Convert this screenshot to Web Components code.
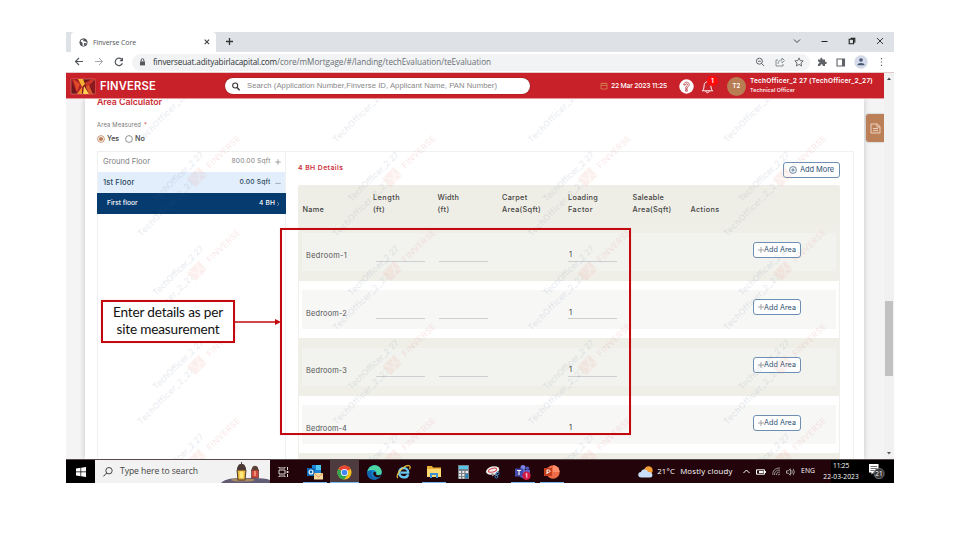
<!DOCTYPE html>
<html lang="en"><head><meta charset="utf-8"><title>Finverse Core</title>
<style>html,body{margin:0;background:#fff;width:960px;height:540px;overflow:hidden}body{padding:32px 66px 0;box-sizing:border-box;position:relative;font-family:Inter,"Open Sans",sans-serif}</style></head><body>
<app-window></app-window>
<note-callout><fit-text s="13.6" w="110" f="Lato" c="#111">Enter details as per</fit-text><fit-text s="13.6" w="103" f="Lato" c="#111">site measurement</fit-text></note-callout>
<script>
const def=(name,css,html)=>{
  const t=document.createElement('template');
  t.innerHTML='<style>*{box-sizing:border-box}svg{display:block;flex:none;overflow:visible}'+css+'</style>'+html;
  customElements.define(name,class extends HTMLElement{constructor(){super();this.attachShadow({mode:'open'}).append(t.content.cloneNode(true));}});
};
def('app-window',':host{display:flex;flex-direction:column;width:828px;height:451px;overflow:hidden}',
 '<tab-strip></tab-strip><nav-bar></nav-bar><page-view></page-view><task-bar></task-bar>');

def('tab-strip',`:host{display:flex;height:20px;flex:none;background:#dee1e6;padding-left:5px;align-items:stretch}
.tab{width:145px;background:#fff;border-radius:4px 4px 0 0;display:flex;align-items:center;padding:0 6px 0 8px}
.tab fit-text{margin-left:5px;margin-right:auto}.plus{margin:5px 0 0 9px}
.win{margin-left:auto;display:flex;align-items:center;padding:0 10px 3px 0;gap:20px}`,
`<div class="tab"><svg width="9" height="9" viewBox="0 0 9 9"><circle cx="4.5" cy="4.5" r="3.7" fill="#fff" stroke="#50555a"/><path d="M1 3l2 1.2.8 1.6-.7 2L1 6zM3.3.8l1.5 1-.9 1.2 2.5.5 1.7 1V2.5L6 .8zM5 5l2.5.3L6 7.8 5 7z" fill="#50555a"/></svg><fit-text s="7" w="43" f="Open Sans" c="#53565a">Finverse Core</fit-text><svg width="6" height="6" viewBox="0 0 6 6"><path d="M.7.7l4.4 4.4M5.1.7L.7 5.1" stroke="#3c4043" stroke-width="1.1"/></svg></div>
<svg class="plus" width="9" height="9" viewBox="0 0 9 9"><path d="M4.5 1v7M1 4.5h7" stroke="#333" stroke-width="1.3"/></svg>
<div class="win"><svg width="8" height="6" viewBox="0 0 8 6"><path d="M1 1.5l3 3 3-3" fill="none" stroke="#444"/></svg><svg width="7" height="6" viewBox="0 0 7 6"><path d="M.5 3.5h6" stroke="#222"/></svg><svg width="8" height="8" viewBox="0 0 8 8"><path d="M1.2 2.2h4.3v4.6H1.2zM2.6 1.2h4.2v4.6" fill="none" stroke="#222" stroke-width="1.1"/></svg><svg width="8" height="8" viewBox="0 0 8 8"><path d="M1 1l6 6M7 1L1 7" stroke="#222" stroke-width=".9"/></svg></div>`);

def('nav-bar',`:host{display:flex;height:21px;flex:none;background:#fff;align-items:center;padding:0 10px 0 8px;border-bottom:1px solid #e4c9ca}
.ico{display:flex;gap:10px;width:58px}.box{width:678px;height:17px;background:#f1f3f4;border-radius:9px;display:flex;align-items:center;padding:0 6px 0 7px;flex:none}
.box fit-text.a{margin-left:7px;margin-right:0}.end{margin-left:auto;display:flex;gap:9.5px;align-items:center}.r{margin-right:9px;margin-left:7px}`,
`<div class="ico"><svg width="10" height="9" viewBox="0 0 10 9"><path d="M9 4.5H1.5M5 1L1.5 4.5 5 8" fill="none" stroke="#50545a" stroke-width="1.1"/></svg><svg width="10" height="9" viewBox="0 0 10 9"><path d="M1 4.5h7.5M5 1l3.5 3.5L5 8" fill="none" stroke="#a4a7ab"/></svg><svg width="10" height="10" viewBox="0 0 10 10"><path d="M8.4 6.2A3.7 3.7 0 1 1 7.7 2.4" fill="none" stroke="#50545a" stroke-width="1.2"/><path d="M9 .6v3.7H5.3z" fill="#50545a"/></svg></div>
<div class="box"><svg width="7" height="8" viewBox="0 0 7 8"><path d="M1 3.4h5v4H1z" fill="#55595e"/><path d="M2.2 3.4V2a1.3 1.3 0 0 1 2.6 0v1.4" fill="none" stroke="#55595e"/></svg>
<fit-text class="a" s="8.2" w="124" f="Open Sans" c="#303338">finverseuat.adityabirlacapital.com</fit-text><fit-text s="8.2" w="214" f="Open Sans" c="#6b6f74">/core/mMortgage/#/landing/techEvaluation/teEvaluation</fit-text>
<div class="end"><svg width="10" height="10" viewBox="0 0 10 10"><circle cx="4.4" cy="4.2" r="3" fill="none" stroke="#62666b"/><path d="M6.7 6.6L9 9M3 4.2h2.8" stroke="#62666b"/></svg><svg width="10" height="10" viewBox="0 0 10 10"><path d="M3 3H1v6h7V7M3 7c0-3 2-4 4-4V1l2.5 2.5L7 6V4.5" fill="none" stroke="#73777b" stroke-width=".8"/></svg><svg width="10" height="10" viewBox="0 0 10 10"><path d="M5 .9l1.2 2.7 3 .3L7 6l.6 3L5 7.4 2.4 9 3 6 .8 3.9l3-.3z" fill="none" stroke="#5f6368" stroke-width=".9"/></svg></div></div>
<svg class="r" width="10" height="10" viewBox="0 0 10 10"><path d="M1 2.5h2.4C2.7 0 6 0 5.4 2.5H8v2.2c2.4-.6 2.4 2.8 0 2.2V9H5.8C6 6.7 3 6.7 3.4 9H1V6.8c2 .2 2-2.4 0-2.2z" fill="#5f6368"/></svg><svg width="10" height="9" viewBox="0 0 10 9"><path d="M1 1h7.5v7H1z" fill="none" stroke="#5f6368" stroke-width="1.1"/><path d="M6 1h2.5v7H6z" fill="#5f6368"/></svg><svg style="margin-left:8px" width="14" height="14" viewBox="0 0 14 14"><circle cx="7" cy="7" r="6.7" fill="#d4dae9"/><circle cx="7" cy="5" r="1.8" fill="#485773"/><path d="M3.4 10.3c0-3 7.2-3 7.2 0z" fill="#485773"/></svg><svg style="margin-left:12px" width="3" height="10" viewBox="0 0 3 10"><path d="M1.5 1v1.2M1.5 4.4v1.2M1.5 7.8V9" stroke="#55585c" stroke-width="1.2"/></svg>`);

def('page-view',`:host{display:flex;height:386px;flex:none;background:#f4f4f4}
.main{width:818px;display:flex;flex-direction:column;overflow:hidden;position:relative}
.bar{width:10px;background:#f1f1f1;display:flex;flex-direction:column;align-items:center;padding:4px 0}
.thumb{margin-top:221px;margin-bottom:auto;width:8px;height:75px;background:#c1c1c1}
.body{display:flex;flex:1;min-height:0}.card{width:779px;margin-left:19px;background:#fff;box-shadow:0 0 6px #0003;padding-left:12px;display:flex;flex-direction:column}
.card>*{flex:none}
.side{margin-left:2px;margin-top:15px;width:18px;height:28px;background:#bc8058;border-radius:3px 0 0 3px;display:flex;align-items:center;justify-content:center;box-shadow:0 0 2px #0005}
.title{height:8px;line-height:0}.title fit-text{margin-top:-1px}.lab{display:flex;margin-top:13.5px;height:9px;align-items:center}
.radio{display:flex;align-items:center;height:10px;margin-top:4px}.radio fit-text{margin:0 6px 0 2px}
.panel{display:flex;margin-top:7px;width:757px;height:340px;border:1px solid #eff0f0}
water-mark{position:absolute;left:0;top:26px;z-index:2}`,
`<div class="main"><app-header></app-header><div class="body"><div class="card"><div class="title"><fit-text s="8.8" w="65" wt="600" c="#cb3038">Area Calculator</fit-text></div>
<div class="lab"><fit-text s="5.8" w="44" c="#777">Area Measured</fit-text><fit-text style="margin-left:3px" s="6" c="#d33">*</fit-text></div>
<div class="radio"><svg width="8" height="8" viewBox="0 0 8 8"><circle cx="4" cy="4" r="3.4" fill="#fff" stroke="#bc8058" stroke-width=".8"/><circle cx="4" cy="4" r="2.1" fill="#bc8058"/></svg><fit-text s="7.2" w="12" wt="500" c="#444">Yes</fit-text><svg width="8" height="8" viewBox="0 0 8 8"><circle cx="4" cy="4" r="3.4" fill="#fff" stroke="#666" stroke-width=".7"/></svg><fit-text s="7.2" w="10" wt="500" c="#444">No</fit-text></div>
<div class="panel"><floor-list></floor-list><room-table></room-table></div></div>
<div class="side"><svg width="11" height="11" viewBox="0 0 11 11"><path d="M1 1h6.3L10 3.5V10H1zM7 1v3h3M3 5.5h5M3 7.7h5" fill="none" stroke="#f3d9c7" stroke-width=".9"/></svg></div></div><water-mark></water-mark></div>
<div class="bar"><svg width="4" height="3" viewBox="0 0 4 3"><path d="M0 3l2-2.5L4 3z" fill="#444"/></svg><div class="thumb"></div><svg width="4" height="3" viewBox="0 0 4 3"><path d="M0 0h4L2 2.5z" fill="#555"/></svg></div>`);

def('app-header',`:host{display:flex;height:26px;flex:none;background:#c82129;align-items:center;padding:1px 8px 0 5px;border-bottom:1px solid #e49a9d;z-index:3}
.s{margin-left:69px;width:305px;height:16px;border-radius:8px;background:#fff;display:flex;align-items:center;padding-left:7px;box-shadow:0 0 1px #300}.s fit-text{margin-left:7px}
.who{display:flex;flex-direction:column;gap:3.5px;margin-left:4px}.av{width:19px;height:19px;border-radius:50%;background:#b97d53;display:flex;align-items:center;justify-content:center;margin-left:13px}
.bell{position:relative;margin-left:7px}.n{position:absolute;left:6px;top:-3px;width:10.5px;height:10.5px;border-radius:50%;background:#ff0b0b;display:flex;align-items:center;justify-content:center}`,
`<svg width="24" height="15" viewBox="0 0 24 15"><path fill="#71151c" stroke="#e3a18b" stroke-width=".5" d="M0 0h24v15H0z"/><path d="M0 0h8l5 9-4 6H6z" fill="#ae1e26"/><path d="M2 0l7 5-3 8z" fill="#df4b29"/><path d="M7 0h5l2 5-3 3z" fill="#f5af32"/><path d="M12 15l1-8 5 8z" fill="#ffd052"/><path d="M14 4l7-4h3L16 11z" fill="#ca3528"/><path d="M18 6l6-4v13z" fill="#8c1820"/><path d="M6 15l5-7v7z" fill="#f0902d"/><path d="M15 8l3-2 4 9h-4z" fill="#db5928"/></svg>
<fit-text style="margin-left:5px;margin-top:2px" s="11.2" w="56" wt="600" c="#fff">FINVERSE</fit-text>
<div class="s"><svg width="8" height="9" viewBox="0 0 8 9"><circle cx="3.2" cy="3.5" r="2.5" fill="none" stroke="#333" stroke-width="1.1"/><path d="M5 5.5L7.6 8.2" stroke="#333" stroke-width="1.4"/></svg><fit-text s="7.7" w="250" f="Liberation Sans" c="#888">Search (Application Number,Finverse ID, Applicant Name, PAN Number)</fit-text></div>
<svg style="margin-left:70px" width="8" height="8" viewBox="0 0 8 8"><path d="M1 1.5h6V7H1zM1 3.4h6M2.5.5v1M5.5.5v1" fill="none" stroke="#d58857" stroke-width=".8"/></svg><fit-text style="margin-left:3px" s="6.8" w="56" wt="500" c="#fff">22 Mar 2023 11:25</fit-text>
<svg style="margin-left:12px" width="15" height="15" viewBox="0 0 15 15"><circle cx="7.5" cy="7.5" r="7.2" fill="#fff"/><path d="M4.8 6c-.3-3.7 5.6-3.7 5.5-.3C10.2 7.6 8.3 7.5 8.3 9.4H6.6C6.6 6.9 8.6 7 8.6 5.6c0-1.1-2.2-1.1-2.2.4zM6.6 10.6h1.7v1.6H6.6z" fill="#fff" stroke="#b9343a" stroke-width=".8"/></svg>
<div class="bell"><svg width="13" height="15" viewBox="0 0 12 14"><path d="M1 11h10c-2-1-1.6-4-2-6C8 1.7 4 1.7 3 5c-.4 2 0 5-2 6zM4.4 11.3c.3 2 2.9 2 3.2 0" fill="none" stroke="#fff" stroke-width=".9"/></svg><span class="n"><fit-text s="6.5" wt="600" c="#fff">1</fit-text></span></div>
<div class="av"><fit-text s="6" w="8" wt="600" c="#fff">T2</fit-text></div><div class="who"><fit-text s="6.6" w="123" wt="600" c="#fff">TechOfficer_2 27 (TechOfficer_2_27)</fit-text><fit-text s="5.4" w="45" wt="500" c="#fff">Technical Officer</fit-text></div>`);

def('floor-list',`:host{display:flex;flex-direction:column;width:188px;flex:none;border-right:1px solid #eff0f0}
div{display:flex;align-items:center;padding:0 4px 0 5px;justify-content:space-between;flex:none}.a{height:20.5px}.b{height:21px;background:#e2eefb}.c{height:21px;background:#063b70;padding-left:10px;padding-right:6px;margin:0 -1px}
span{display:flex;align-items:center;gap:4.5px}.c span{gap:1px}`,
`<div class="a"><fit-text s="7.6" w="47" c="#808080">Ground Floor</fit-text><span><fit-text s="6.7" w="39" c="#808080">800.00 Sqft</fit-text><svg width="6" height="6" viewBox="0 0 6 6"><path d="M3 .3v5.4M.3 3h5.4" stroke="#888" stroke-width=".8"/></svg></span></div>
<div class="b"><fit-text s="7.6" w="31.5" wt="500" c="#29465e">1st Floor</fit-text><span><fit-text s="6.7" w="31" wt="500" c="#29465e">0.00 Sqft</fit-text><svg width="6" height="6" viewBox="0 0 6 6"><path d="M.3 3.4h5.4" stroke="#99a" stroke-width=".8"/></svg></span></div>
<div class="c"><fit-text s="6.6" w="30.5" wt="500" c="#fff">First floor</fit-text><span><fit-text s="6.6" w="16" wt="500" c="#fff">4 BH</fit-text><svg width="4" height="6" viewBox="0 0 4 6"><path d="M1.2 1l1.8 2-1.8 2" fill="none" stroke="#8fa7bf" stroke-width=".7"/></svg></span></div>`);

def('out-button',`:host{display:flex;align-items:center;justify-content:center;border:1px solid #6d90b2;border-radius:3px;background:#fff;height:16px}`,`<slot></slot>`);

def('room-table',`:host{display:flex;flex-direction:column;margin-left:12px;width:542px}
.top{display:flex;justify-content:space-between;align-items:center;height:33px;flex:none;padding-top:4px}.top fit-text.h{margin-top:-3px}
out-button{width:57px}out-button fit-text{margin-left:3px}
.head{display:grid;flex:none;grid-template-columns:70.5px 64.5px 64.5px 66px 64.5px 58px 1fr;padding:0 0 10px 4.5px;background:#efeee6;height:38.5px;align-items:end;border-radius:2px 2px 0 0}
.head div{display:flex;flex-direction:column;gap:4.2px}`,
`<div class="top"><fit-text class="h" s="6.8" w="45.5" wt="600" c="#cc333b">4 BH Details</fit-text><out-button><svg width="8" height="8" viewBox="0 0 8 8"><circle cx="4" cy="4" r="3.4" fill="none" stroke="#47688a" stroke-width=".8"/><path d="M4 2.2v3.6M2.2 4h3.6" stroke="#47688a" stroke-width=".8"/></svg><fit-text s="7.5" w="34" c="#2e5072">Add More</fit-text></out-button></div>
<div class="head"><div><fit-text s="7.3" w="21.5" wt="500">Name</fit-text></div><div><fit-text s="7.3" w="27" wt="500">Length</fit-text><fit-text s="7.3" w="12" wt="500">(ft)</fit-text></div><div><fit-text s="7.3" w="21.5" wt="500">Width</fit-text><fit-text s="7.3" w="12" wt="500">(ft)</fit-text></div><div><fit-text s="7.3" w="25.5" wt="500">Carpet</fit-text><fit-text s="7.3" w="39" wt="500">Area(Sqft)</fit-text></div><div><fit-text s="7.3" w="30" wt="500">Loading</fit-text><fit-text s="7.3" w="25" wt="500">Factor</fit-text></div><div><fit-text s="7.3" w="31.5" wt="500">Saleable</fit-text><fit-text s="7.3" w="39" wt="500">Area(Sqft)</fit-text></div><div><fit-text s="7.3" w="29" wt="500">Actions</fit-text></div></div>
<room-row class="odd"><fit-text s="7.4" w="41" c="#555">Bedroom-1</fit-text></room-row><room-row><fit-text s="7.4" w="41" c="#555">Bedroom-2</fit-text></room-row><room-row class="odd"><fit-text s="7.4" w="41" c="#555">Bedroom-3</fit-text></room-row><room-row><fit-text s="7.4" w="41" c="#555">Bedroom-4</fit-text></room-row><div style="height:8px;background:#efefe8;flex:none"></div>`);

def('room-row',`:host{display:block;flex:none;height:57.6px;padding:9.6px 3px 9.6px 3px;border-left:1px solid #f0f0eb;border-right:1px solid #f0f0eb;background:#fff;--in:#f7f7f6}:host(.odd){background:#efefe8;--in:#f2f3ee}
.in{height:38.4px;background:var(--in);display:grid;grid-template-columns:73.5px 63.5px 129px 49px 136px 48px;align-items:center}
.nm{padding:8px 0 0 4px;display:flex}.f{height:14.5px;width:49px;border-bottom:1px solid #ccd0d2;margin-top:5px}.v{display:flex;align-items:flex-end;padding:0 0 2px 1px}
out-button{margin-top:-4px;height:16px;width:48px}`,
`<div class="in"><div class="nm"><slot></slot></div><div class="f"></div><div class="f"></div><div class="f v"><fit-text s="7.4" c="#444">1</fit-text></div><i></i><out-button><svg width="6" height="6" viewBox="0 0 6 6"><path d="M3 0v6M0 3h6" stroke="#999" stroke-width=".9"/></svg><fit-text s="7.2" w="32" c="#2e5072">Add Area</fit-text></out-button></div>`);

customElements.define('water-mark',class extends HTMLElement{connectedCallback(){
 const r=this.attachShadow({mode:'open'});let g='';
 for(let i=0;i<4;i++)for(let j=0;j<5;j++){
  const up=j<4?`<text class="r" transform="translate(13 -8) rotate(-44)" textLength="43">FINVERSE</text>`:'<text class="r" transform="translate(13 -8) rotate(-44)" textLength="43">FINVERSE</text>';
  const t1=j>0?`<text transform="translate(-41 25) rotate(-44)" textLength="67">TechOfficer_2 27</text>`:'';
  g+=`<g transform="translate(${131+i*195.3} ${-16+j*94})">${j<4?t1:t1}<text transform="translate(-56 60) rotate(-45)" textLength="76">TechOfficer_2_27</text><g transform="rotate(-45)"><path d="M-8-6H8V6H-8z" fill="#ec7e68" opacity=".75"/><path d="M-6-6L0 5 5-6M-2 6L3-1 8 6" stroke="#fff" stroke-width="1.3" fill="none" opacity=".6"/></g>${j>0?up:''}</g>`;}
 r.innerHTML=`<style>:host{display:block;width:818px;height:360px;pointer-events:none}svg{display:block}text{font:8.5px Inter,sans-serif;fill:#50688f}.r{fill:#e0606a}</style><svg width="818" height="360" opacity=".14">${g}</svg>`;
}});

def('task-bar',`:host{display:flex;height:24px;flex:none;background:#22040a;border-top:1px solid #554a4c;align-items:stretch}
.st{width:29px;background:#000;display:flex;align-items:center;justify-content:center}.se{width:175px;background:#f2f2f2;display:flex;align-items:center;padding-left:8px;overflow:hidden}.se fit-text{margin:0 auto 0 7px}
.i{width:29.7px;display:flex;align-items:center;justify-content:center;padding-top:1px}.u{background:linear-gradient(#76b9ed,#76b9ed) 50% 100%/24px 1.5px no-repeat}.i.on{background:linear-gradient(#76b9ed,#76b9ed) 50% 100%/100% 1.5px no-repeat,#4d3b3f}
.w{margin-left:71px;display:flex;align-items:center;gap:4px;width:102px}.tr{display:flex;align-items:center;gap:6px;width:91px;padding-left:3px}
.e{background:#000;width:63px;display:flex;align-items:center}.clk{display:flex;flex-direction:column;align-items:center;gap:4px;width:36px;margin-left:-8px}.no{margin-left:10px}`,
`<div class="st"><svg width="10" height="10" viewBox="0 0 10 10"><path d="M0 1.4L4.5.8v3.8H0zM5.2.7L10 0v4.6H5.2zM0 5.3h4.5v3.9L0 8.6zM5.2 5.3H10V10l-4.8-.7z" fill="#fff"/></svg></div>
<div class="se"><svg width="10" height="10" viewBox="0 0 10 10"><circle cx="6" cy="3.7" r="3.2" fill="none" stroke="#333" stroke-width=".9"/><path d="M3.7 6L.4 9.4" stroke="#333"/></svg><fit-text s="8.6" w="78" f="Open Sans" c="#444">Type here to search</fit-text>
<svg width="49" height="23" viewBox="0 0 49 23"><path d="M0 23c6-6 19-5 27-5s17 0 22 2v3z" fill="#625b74"/><ellipse cx="22" cy="20" rx="12" ry="1.6" fill="#a98960"/><path d="M17 6c1-3 6-3 7 0l1 2v2h-9V8z" fill="#4c3935"/><path d="M20.5 2v3" stroke="#5c4942"/><path d="M16 10h9l-1 10h-7z" fill="#e8b539" stroke="#503b30"/><path d="M18.5 11.5h4v6.5h-4z" fill="#ffe879"/><path d="M31 8c1-3 5-3 6 0l1 3h-8z" fill="#584238"/><path d="M30.5 10h7v8h-7z" fill="#c9493c" stroke="#5d3934" stroke-width=".7"/><path d="M33 11h2v5h-2z" fill="#f38f70"/></svg></div>
<div class="i" style="width:28px"><svg width="11" height="10" viewBox="0 0 11 10"><path d="M1 3h6v4H1zM1 0v1h6V0M1 10V9h6v1M9.5 0v3M9.5 7v3" fill="none" stroke="#eee" stroke-width=".9"/><path d="M8.7 4h1.7v2H8.7z" fill="#eee"/></svg></div>
<div class="i u" style="margin-left:2px"><svg width="16" height="15" viewBox="0 0 16 15"><path d="M5 0h9v10H5z" fill="#1a83d5"/><path d="M9 0h5v5H9z" fill="#50c8f4"/><path d="M0 3h8v8H0z" fill="#0867b5"/><circle cx="4" cy="7" r="2" fill="none" stroke="#fff" stroke-width="1.1"/><path d="M7 8h9v6.5H7z" fill="#f9d8a0"/><path d="M7 8l4.5 4L16 8" fill="none" stroke="#c97a35" stroke-width=".7"/></svg></div>
<div class="i on"><svg width="15" height="15" viewBox="0 0 15 15"><circle cx="7.5" cy="7.5" r="7" fill="#fbc116"/><path d="M7.5 7.5L1.4 4A7 7 0 0 1 13.6 4z" fill="#e94335"/><path d="M7.5 7.5L1.4 4A7 7 0 0 0 7 14.5l4-5z" fill="#31a653"/><circle cx="7.5" cy="7.5" r="3.6" fill="#fff"/><circle cx="7.5" cy="7.5" r="2.8" fill="#4285f4"/></svg></div>
<div class="i"><svg width="15" height="15" viewBox="0 0 15 15"><circle cx="7.5" cy="7.5" r="7.2" fill="#1688d0"/><path d="M.4 6.5C2-2 14-2 14.7 7c0 3-3 4-5.5 3 2-4-3-7-8.8-3.5z" fill="#4bd6a3"/><path d="M5 6.5C4 12 9 14 13 12 9 17-1 15 .4 7c2-2 4-1.8 4.6-.5z" fill="#1267b2"/><path d="M6.5 7.3c1-1.5 3.3 0 2.3 2 1.3 1.3 3.7 1 5 .2-.5 2-1 2.5-2 2.8-3 .7-6.5-2-5.3-5z" fill="#22040a"/></svg></div>
<div class="i"><svg width="15" height="14" viewBox="0 0 16 15"><path d="M13 10C11.5 15 3.4 14 3.4 8 3.4 1.8 13 1.8 13 8.2H5" fill="none" stroke="#69c9f3" stroke-width="2.6"/><path d="M2 14C-2 11 9-1 14.5 1c1.2.6.5 2.5 0 3.5" fill="none" stroke="#f1c83d" stroke-width="1.2"/></svg></div>
<div class="i u"><svg width="14" height="12" viewBox="0 0 14 12"><path d="M0 0h5l1 1.5h8V11H0z" fill="#e9ae36"/><path d="M0 3h14v8H0z" fill="#ffda70"/><path d="M3 7h8v5H9V9H5v3H3z" fill="#3d91d5"/></svg></div>
<div class="i"><svg width="11" height="14" viewBox="0 0 11 14"><path d="M0 0h11v14H0z" fill="#7a8289"/><path d="M1 1h9v3H1z" fill="#56c7e9"/><path d="M1 6h2v2H1zM4.3 6h2v2h-2zM1 9h2v2H1zM4.3 9h2v2h-2zM1 12h2v1.4H1zM4.3 12h2v1.4h-2zM7.6 6H10v2H7.6z" fill="#eee"/><path d="M7.6 9H10v4.4H7.6z" fill="#2288c0"/></svg></div>
<div class="i"><svg width="15" height="13" viewBox="0 0 15 13"><ellipse cx="7.5" cy="4.6" rx="6.8" ry="4" transform="rotate(-15 7 4)" fill="#eee"/><ellipse cx="7.5" cy="4.3" rx="4.2" ry="1.8" transform="rotate(-15 7 4)" fill="none" stroke="#d9474b" stroke-width="1"/><path d="M6 7l7 3M7 10l6-4" stroke="#bbb"/><circle cx="12.7" cy="7.4" r="1.4" fill="none" stroke="#3182c3"/><circle cx="11.5" cy="10.8" r="1.4" fill="none" stroke="#3182c3"/></svg></div>
<div class="i u"><svg width="17" height="15" viewBox="0 0 17 15"><circle cx="9" cy="2.5" r="2.5" fill="#7b83eb"/><circle cx="13.5" cy="3.2" r="1.7" fill="#5059c9"/><path d="M5 5h11v5c-1 5-10 4-11 0z" fill="#5b62c9"/><path d="M1 3.5h8v8H1z" fill="#4249a9"/><path d="M3 5.5h4M5 5.5v4.5" stroke="#fff" stroke-width="1.1"/><circle cx="12.5" cy="10.7" r="4.2" fill="#d31b45"/><path d="M11.7 9.2l1.1-.7v4.2" fill="none" stroke="#fff" stroke-width=".9"/></svg></div>
<div class="i u"><svg width="16" height="14" viewBox="0 0 16 14"><circle cx="9" cy="7" r="6.7" fill="#ed6c47"/><path d="M9 .3A6.7 6.7 0 0 1 15.7 7H9z" fill="#ff8f6b"/><path d="M0 3h8v8H0z" fill="#c43e1c"/><path d="M3 9V5h1.3c2.3 0 2.3 2.4 0 2.4H3" fill="none" stroke="#fff" stroke-width="1"/></svg></div>
<div class="w"><svg width="15" height="12" viewBox="0 0 15 12"><circle cx="10.5" cy="4.5" r="4.2" fill="#f69c35"/><path d="M3.5 11.5C-1 11.5-.5 6 3 6c1-4 6-3.5 7 0 5-1 6 5.5 2 5.5z" fill="#c9def7"/></svg><fit-text s="7.8" w="18" f="Open Sans" c="#fff">21°C</fit-text><fit-text style="margin-left:1px" s="7.8" w="52.5" f="Open Sans" c="#fff">Mostly cloudy</fit-text></div>
<div class="tr"><svg width="7" height="5" viewBox="0 0 7 5"><path d="M.5 4l3-3 3 3" fill="none" stroke="#fff"/></svg><svg width="10" height="6" viewBox="0 0 10 6"><path d="M.5.8h8v4.4h-8zM9.4 2v2" fill="none" stroke="#fff"/><path d="M3 2h4.5v2H3z" fill="#fff"/></svg><svg width="8" height="9" viewBox="0 0 8 9"><path d="M1 8C0 4 3 1 8 1M2.7 8C2 5.5 4 3 8 3M4.5 8c0-2 1-3 3.5-3M6 8l2-1" fill="none" stroke="#bbb" stroke-width=".8"/></svg><svg width="9" height="8" viewBox="0 0 9 8"><path d="M.5 2.8h1.7L4.4.8v6.4L2.2 5.2H.5z" fill="none" stroke="#ddd" stroke-width=".7"/><path d="M5.7 2.2q1.2 1.8 0 3.6M7.2 1q2.2 3 0 6" fill="none" stroke="#ddd" stroke-width=".7"/></svg><fit-text s="6.8" w="14" f="Open Sans" c="#fff">ENG</fit-text></div>
<div class="e"><div class="clk"><fit-text s="6.6" w="16" f="Open Sans" c="#fff">11:25</fit-text><fit-text s="6.6" w="35.5" f="Open Sans" c="#fff">22-03-2023</fit-text></div><div class="no"><svg width="16" height="15" viewBox="0 0 16 15"><path d="M0 0h9.5v8.5H4.5L2.5 10.5v-2H0z" fill="#fff"/><path d="M1.5 2.5h6.5M1.5 4.5h6.5M1.5 6.5h4" stroke="#333" stroke-width=".7"/><circle cx="10" cy="9.5" r="5.2" fill="#3a3a3a" stroke="#999" stroke-width=".6"/><text x="10" y="12" text-anchor="middle" font-family="Open Sans" font-size="6.5" fill="#fff">21</text></svg></div></div>`);

def('note-callout',`:host{position:absolute;left:101px;top:228px;width:530px;height:207px;z-index:5;display:block}
.area{position:absolute;left:179px;top:0;width:351px;height:207px;border:2px solid #c2090f;box-shadow:0 0 1px #a004}
.box{position:absolute;left:0;top:72px;width:134px;height:43px;border:2px solid #c2090f;background:#fff;display:flex;flex-direction:column;align-items:center;justify-content:center;gap:3px;box-shadow:0 0 1px #a004}
svg{position:absolute;left:134px;top:90px}`,`<div class="area"></div><div class="box"><slot></slot></div><svg width="46" height="8" viewBox="0 0 46 8"><path d="M0 4h41" stroke="#c2090f" stroke-width="1.6"/><path d="M40 1l6 3-6 3z" fill="#c2090f"/></svg>`);

/* Text run set to a given width by even tracking. */
customElements.define('fit-text',class extends HTMLElement{connectedCallback(){
 if(this.shadowRoot)return;const a=k=>this.getAttribute(k),r=this.attachShadow({mode:'open'});
 r.innerHTML=`<style>:host{display:block;flex:none;width:max-content;line-height:1}span{display:block;width:max-content;white-space:nowrap;font:${a('wt')||400} ${a('s')}px/1 "${a('f')||'Inter'}",sans-serif;color:${a('c')||'#444'};height:${a('s')}px}</style><span><slot></slot></span>`;
 if(a('w')){const s=r.querySelector('span'),n=this.textContent.length;s.style.letterSpacing=((+a('w')-s.getBoundingClientRect().width)/n)+'px';}
}});
</script></body></html>
